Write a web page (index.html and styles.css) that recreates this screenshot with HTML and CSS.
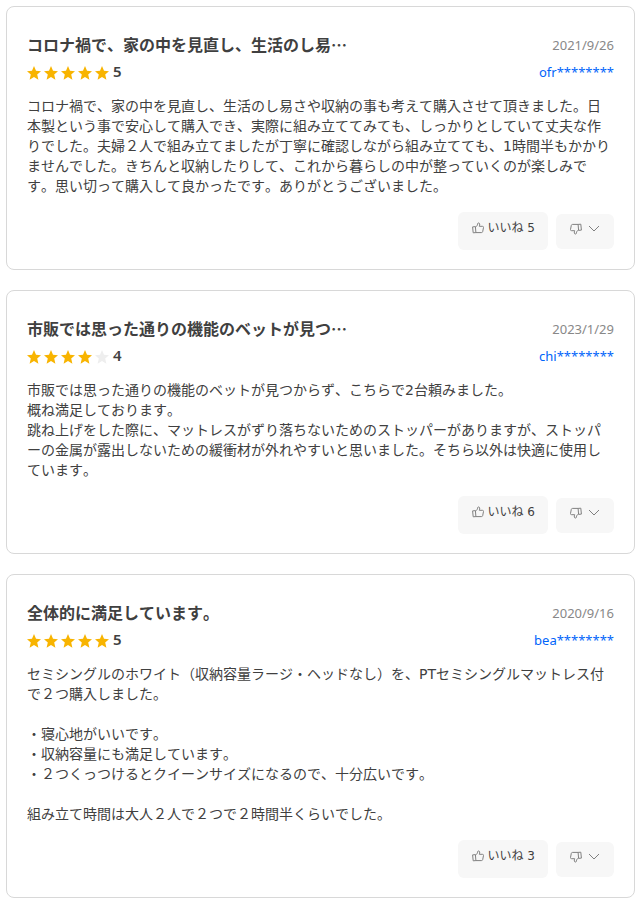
FILE: index.html
```
<!DOCTYPE html>
<html lang="ja">
<head>
    <meta charset="UTF-8">
    <meta name="viewport" content="width=device-width, initial-scale=1.0">
    <title>商品レビュー</title>
    <link rel="stylesheet" href="styles.css">
</head>
<body>
    <!-- Shared icons -->
    <svg class="sprite" aria-hidden="true">
        <symbol id="star" viewBox="0 0 14 14">
            <path d="M7 0l2 4.7 5 .5-3.800 3.300 1.200 5.200L7 11l-4.400 2.700 1.200-5.200L0 5.200l5-.5z" />
        </symbol>
        <symbol id="thumb" viewBox="0 0 12 12">
            <path d="M.6 4.900l2.800-.3.500 6-2.700.2zM3.400 5.200C4.800 4.300 5.500 3.300 5.600 1.800 5.700.6 7.500.6 7.700 2c.1.800-.1 1.500-.4 2.300h3.100c.8 0 1.200.5 1.100 1.200l-.8 4.100c-.2.700-.6 1-1.300 1H3.900" />
        </symbol>
        <symbol id="chevron" viewBox="0 0 12 12">
            <path d="M1 3l5 5 5-5" />
        </symbol>
    </svg>

    <main class="reviews">
        <article class="review">
            <header class="row title-row">
                <h2>コロナ禍で、家の中を見直し、生活のし易…</h2>
                <time datetime="2021-09-26">2021/9/26</time>
            </header>
            <div class="row rating-row">
                <div class="rating">
                    <svg class="star"><use href="#star" /></svg>
                    <svg class="star"><use href="#star" /></svg>
                    <svg class="star"><use href="#star" /></svg>
                    <svg class="star"><use href="#star" /></svg>
                    <svg class="star"><use href="#star" /></svg>
                    <span class="score">5</span>
                </div>
                <a class="user" href="#">ofr********</a>
            </div>
            <p class="comment">コロナ禍で、家の中を見直し、生活のし易さや収納の事も考えて購入させて頂きました。日本製という事で安心して購入でき、実際に組み立ててみても、しっかりとしていて丈夫な作りでした。夫婦２人で組み立てましたが丁寧に確認しながら組み立てても、1時間半もかかりませんでした。きちんと収納したりして、これから暮らしの中が整っていくのが楽しみです。思い切って購入して良かったです。ありがとうございました。</p>
            <footer class="actions">
                <button type="button" class="like"><svg class="icon"><use href="#thumb" /></svg>いいね 5</button>
                <button type="button" class="dislike" aria-label="よくないね"><svg class="icon down"><use href="#thumb" /></svg><svg class="icon"><use href="#chevron" /></svg></button>
            </footer>
        </article>

        <article class="review">
            <header class="row title-row">
                <h2>市販では思った通りの機能のベットが見つ…</h2>
                <time datetime="2023-01-29">2023/1/29</time>
            </header>
            <div class="row rating-row">
                <div class="rating">
                    <svg class="star"><use href="#star" /></svg>
                    <svg class="star"><use href="#star" /></svg>
                    <svg class="star"><use href="#star" /></svg>
                    <svg class="star"><use href="#star" /></svg>
                    <svg class="star off"><use href="#star" /></svg>
                    <span class="score">4</span>
                </div>
                <a class="user" href="#">chi********</a>
            </div>
            <p class="comment">市販では思った通りの機能のベットが見つからず、こちらで2台頼みました。<br>
            概ね満足しております。<br>
            跳ね上げをした際に、マットレスがずり落ちないためのストッパーがありますが、ストッパーの金属が露出しないための緩衝材が外れやすいと思いました。そちら以外は快適に使用しています。</p>
            <footer class="actions">
                <button type="button" class="like"><svg class="icon"><use href="#thumb" /></svg>いいね 6</button>
                <button type="button" class="dislike" aria-label="よくないね"><svg class="icon down"><use href="#thumb" /></svg><svg class="icon"><use href="#chevron" /></svg></button>
            </footer>
        </article>

        <article class="review">
            <header class="row title-row">
                <h2>全体的に満足しています。</h2>
                <time datetime="2020-09-16">2020/9/16</time>
            </header>
            <div class="row rating-row">
                <div class="rating">
                    <svg class="star"><use href="#star" /></svg>
                    <svg class="star"><use href="#star" /></svg>
                    <svg class="star"><use href="#star" /></svg>
                    <svg class="star"><use href="#star" /></svg>
                    <svg class="star"><use href="#star" /></svg>
                    <span class="score">5</span>
                </div>
                <a class="user" href="#">bea********</a>
            </div>
            <p class="comment">セミシングルのホワイト（収納容量ラージ・ヘッドなし）を、PTセミシングルマットレス付で２つ購入しました。<br>
            <br>
            ・寝心地がいいです。<br>
            ・収納容量にも満足しています。<br>
            ・２つくっつけるとクイーンサイズになるので、十分広いです。<br>
            <br>
            組み立て時間は大人２人で２つで２時間半くらいでした。</p>
            <footer class="actions">
                <button type="button" class="like"><svg class="icon"><use href="#thumb" /></svg>いいね 3</button>
                <button type="button" class="dislike" aria-label="よくないね"><svg class="icon down"><use href="#thumb" /></svg><svg class="icon"><use href="#chevron" /></svg></button>
            </footer>
        </article>
    </main>
</body>
</html>
```
FILE: styles.css
```
* {
    box-sizing: border-box;
}
body {
    margin: 0;
    padding: 6px 5px 8px 6px;
    background-color: #fff;
    color: #404040;
    font-family: "DejaVu Sans", "Noto Sans CJK JP", sans-serif;
    font-size: 14px;
    font-kerning: none;
    line-height: 20px;
}
.sprite {
    display: none;
}
.reviews {
    display: flex;
    flex-direction: column;
    gap: 20px;
}
.review {
    padding: 20px 20px 19px;
    border: 1px solid #d8d8d8;
    border-radius: 8px;
}
.row {
    display: flex;
    align-items: center;
    justify-content: space-between;
}
.title-row {
    height: 36px;
}
h2 {
    margin: 0;
    padding-bottom: 2px;
    font-family: "Noto Sans CJK JP", sans-serif;
    font-size: 16px;
    font-weight: bold;
}
time {
    color: #888;
    font-family: "Noto Sans", sans-serif;
    font-size: 13px;
}
.rating-row {
    height: 20px;
}
.rating {
    display: flex;
    align-items: center;
    gap: 3px;
}
.star {
    width: 14px;
    height: 14px;
    fill: #f8b400;
}
.star.off {
    fill: #eee;
}
.score {
    margin-left: 1px;
    padding-bottom: 4px;
    font-family: "Noto Sans", sans-serif;
    font-size: 15px;
    font-weight: 600;
}
.user {
    padding-bottom: 2px;
    color: #0064fa;
    font-family: "Noto Sans", sans-serif;
    font-size: 13px;
    text-decoration: none;
}
.user:hover {
    text-decoration: underline;
}
.comment {
    margin: 13px 0 16px;
}
.actions {
    display: flex;
    align-items: center;
    justify-content: flex-end;
    gap: 8px;
}
button {
    display: flex;
    align-items: center;
    border: none;
    border-radius: 6px;
    background-color: #f7f7f7;
    color: #404040;
    font-family: inherit;
    font-size: 12px;
    line-height: 20px;
    cursor: pointer;
}
.like {
    gap: 4px;
    height: 38px;
    padding: 0 13px 6px 14px;
}
.dislike {
    gap: 6px;
    height: 35px;
    padding: 0 14px 4px;
}
.icon {
    width: 12px;
    height: 12px;
    fill: none;
    stroke: #808080;
    stroke-width: 1;
}
.icon.down {
    transform: rotate(180deg);
}
```
